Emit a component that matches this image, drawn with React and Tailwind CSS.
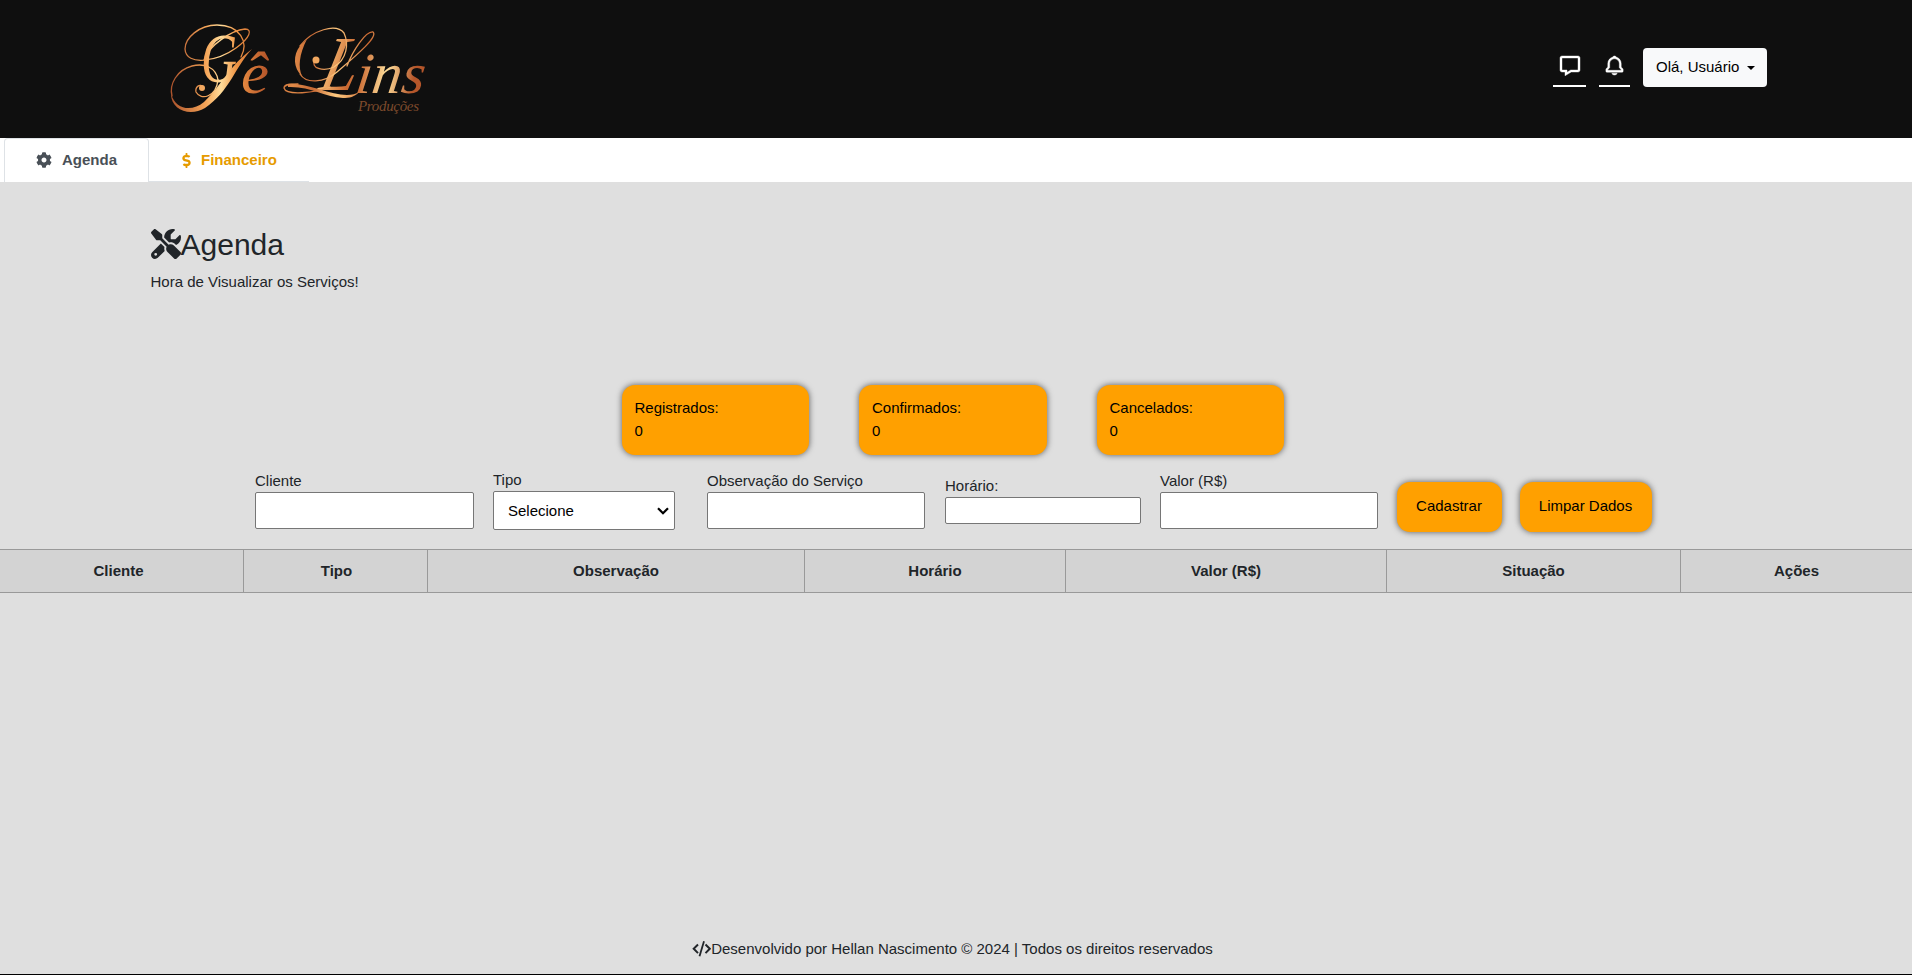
import { FaCog, FaDollarSign } from "react-icons/fa";
import { FaScrewdriverWrench } from "react-icons/fa6";
import { BiMessage, BiBell } from "react-icons/bi";

const font = "font-['Liberation_Sans',Arial,sans-serif]";

function Logo() {
  return (
    <svg width="260" height="108" viewBox="167 10 260 108" className="block overflow-visible">
      <defs>
        <linearGradient id="gold" x1="170" y1="0" x2="425" y2="0" gradientUnits="userSpaceOnUse">
          <stop offset="0" stopColor="#a9502a" />
          <stop offset="0.14" stopColor="#f5a457" />
          <stop offset="0.2" stopColor="#ffdc9a" />
          <stop offset="0.26" stopColor="#f09545" />
          <stop offset="0.38" stopColor="#b5562a" />
          <stop offset="0.48" stopColor="#e08a48" />
          <stop offset="0.56" stopColor="#c76a35" />
          <stop offset="0.65" stopColor="#ffca80" />
          <stop offset="0.78" stopColor="#c9662f" />
          <stop offset="0.89" stopColor="#ffdf9b" />
          <stop offset="1" stopColor="#b5562a" />
        </linearGradient>
      </defs>
      <g fill="url(#gold)" fontFamily="'Liberation Serif', serif" fontStyle="italic">
        <text x="201" y="82" fontSize="70" textLength="36" lengthAdjust="spacingAndGlyphs">G</text>
        <text x="241" y="93" fontSize="60" textLength="28" lengthAdjust="spacingAndGlyphs">ê</text>
        <text x="340" y="90" fontSize="78" textLength="36" lengthAdjust="spacingAndGlyphs" transform="skewX(-14)">L</text>
        <text x="367" y="93" fontSize="58" textLength="69" lengthAdjust="spacingAndGlyphs" transform="skewX(-8)">ins</text>
        <text x="358" y="111" fontSize="15" fill="#7d4a2c" textLength="61">Produções</text>
      </g>
      <g fill="none" stroke="url(#gold)" strokeLinecap="round">
        <path strokeWidth="1.300" d="M241 57C249 42 240 25 217 25C199 25 185 38 185 49C186 67 218 61 236 48C250 38 253 29 245 29C232 30 208 46 204 60" />
        <path strokeWidth="1.300" d="M218 80C216 67 204 63 192 66C177 70 169 84 172 96" />
        <path strokeWidth="1.300" d="M218 80C216 97 201 101 196 92C195 87 200 83 203 87" />
        <path strokeWidth="1.300" d="M315 60C310 68 323 72 334 67C347 59 349 44 344 33C336 23 312 30 300 46" />
        <path strokeWidth="1.300" d="M300 74C306 84 324 83 337 72C352 59 379 37 373 32C366 31 353 50 347 66" />
        <path strokeWidth="1.300" d="M330 87C315 93 286 96 284 88C284 84 291 84 298 84" />
      </g>
      <g fill="url(#gold)">
        <path d="M252 49C235 67 230 91 205 108C190 117 171 110 171 94C176 110 192 112 204 102C222 85 229 66 252 49Z" />
        <path d="M300 46C293 55 293 68 302 76C298 67 299 55 307 39Z" />
        <path d="M288 84C304 82 330 95 347 95C352 95 356 94 359 92C355 97 349 98 343 98C325 97 310 86 288 87Z" />
      </g>
      <g fill="#f2a860">
        <circle cx="202" cy="88" r="3" />
        <circle cx="316" cy="60" r="3.500" />
      </g>
    </svg>
  );
}

const stats = ["Registrados:", "Confirmados:", "Cancelados:"];

const columns = [
  ["Cliente", "w-[244px] pr-[6px]"],
  ["Tipo", "w-[184px] pl-[2px]"],
  ["Observação", "w-[377px]"],
  ["Horário", "w-[261px]"],
  ["Valor (R$)", "w-[321px]"],
  ["Situação", "w-[294px]"],
  ["Ações", "w-[231px]"],
];

function Field({ label, className, inputClass }) {
  return (
    <label className={"flex shrink-0 flex-col " + className}>
      <span className="h-[23px] pt-px">{label}</span>
      <input className={"block w-full rounded-[2px] border border-[#767676] bg-white px-3 " + inputClass} />
    </label>
  );
}

const orange = "rounded-[13px] bg-[#ffa000] text-black shadow-[0_0_6px_rgba(0,0,0,0.6)]";

export default function App() {
  return (
    <div className={"flex h-[975px] w-full flex-col overflow-hidden border-b border-black bg-[#dfdfdf] text-[15px] leading-[22.500px] text-[#212529] " + font}>
      <header className="flex h-[138px] shrink-0 items-start justify-between bg-[#0f0f0f] pr-[145px] pl-[167px]">
        <div className="pt-2.5"><Logo /></div>
        <div className="flex pt-12 text-white">
          <button className="flex h-[39px] w-[33px] justify-center border-b-2 border-white pt-1.5"><BiMessage size={24} strokeWidth={0.4} /></button>
          <button className="ml-[13px] flex h-[39px] w-[31px] justify-center border-b-2 border-white pt-1.5"><BiBell size={23} strokeWidth={0.4} /></button>
          <button className="ml-[13px] flex h-[39px] w-[124px] items-center rounded bg-[#f8f9fa] pl-[13px] text-black">
            Olá, Usuário
            <span className="ml-[8px] border-x-4 border-t-4 border-x-transparent border-t-black" />
          </button>
        </div>
      </header>

      <nav className="flex h-11 shrink-0 bg-white pl-1 font-bold">
        <a className="flex w-[145px] items-center rounded-t border border-b-0 border-[#dee2e6] pb-px pl-[31px] text-[#495057]">
          <FaCog size={16} />
          <span className="ml-[10px]">Agenda</span>
        </a>
        <a className="flex w-[160px] items-center border-b border-[#dee2e6] pt-px pl-[30px] text-[#e69b00]">
          <FaDollarSign size={15} />
          <span className="ml-[7px]">Financeiro</span>
        </a>
      </nav>

      <section className="h-[203px] shrink-0 pt-11 pl-[150.500px]">
        <h1 className="flex h-9 items-center text-[30px] leading-9">
          <FaScrewdriverWrench size={30} />
          <span className="pt-0.5">Agenda</span>
        </h1>
        <p className="mt-[9px]">Hora de Visualizar os Serviços!</p>
      </section>

      <section className="flex h-[70px] shrink-0 gap-[50px] pl-[621.500px]">
        {stats.map((name) => (
          <div key={name} className={"w-[187.500px] px-[13px] pt-3 " + orange}>
            <p>{name}</p>
            <p>0</p>
          </div>
        ))}
      </section>

      <form className="flex h-[94px] shrink-0 items-start pl-[255px]">
        <Field label="Cliente" className="mt-[14px] w-[219px]" inputClass="h-[37px]" />
        <label className="mt-[13px] ml-[19px] flex w-[182px] shrink-0 flex-col">
          <span className="h-[23px] pt-px">Tipo</span>
          <span className="flex h-[39px] items-center justify-between rounded-[2px] border border-[#767676] bg-white pt-px pr-[5px] pl-[14px] text-black">
            Selecione
            <svg width="12" height="8" viewBox="0 0 12 8" fill="none" stroke="currentColor" strokeWidth="2.200">
              <path d="M1 1.200 6 6.200 11 1.200" />
            </svg>
          </span>
        </label>
        <Field label="Observação do Serviço" className="mt-[14px] ml-8 w-[218px]" inputClass="h-[37px]" />
        <Field label="Horário:" className="mt-[19px] ml-5 w-[196px]" inputClass="h-[27px]" />
        <Field label="Valor (R$)" className="mt-[14px] ml-[19px] w-[218px]" inputClass="h-[37px]" />
        <button type="button" className={"mt-[27px] ml-[18.500px] h-[49.500px] w-[105px] shrink-0 pb-px " + orange}>Cadastrar</button>
        <button type="button" className={"mt-[27px] ml-[18px] h-[49.500px] w-[132px] shrink-0 pb-px " + orange}>Limpar Dados</button>
      </form>

      <div className="flex h-11 shrink-0 border-y border-[#999] bg-[#d3d3d3] font-bold">
        {columns.map(([name, width], i) => (
          <div key={name} className={"flex shrink-0 items-center justify-center border-[#999] " + width + (i < 6 ? " border-r" : "")}>
            {name}
          </div>
        ))}
      </div>

      <footer className="mt-auto flex h-9 items-start justify-center pr-[7px]">
        <svg width="19" height="16" viewBox="0 0 19 16" fill="none" stroke="currentColor" className="mt-[3px]">
          <path strokeWidth="2" d="M6 3.500 1.700 7.800 6 12.100M13.500 3.500 17.800 7.800 13.500 12.100" />
          <path strokeWidth="1.800" d="M12 0.300 7.500 15.300" />
        </svg>
        <span>Desenvolvido por Hellan Nascimento © 2024 | Todos os direitos reservados</span>
      </footer>
    </div>
  );
}
